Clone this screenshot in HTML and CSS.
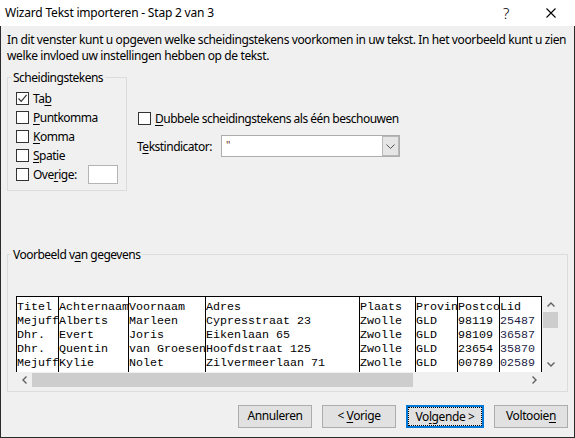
FILE: index.html
```html
<!DOCTYPE html>
<html lang="nl">

<head>
    <title>Wizard Tekst importeren</title>
    <meta charset="UTF-8">
    <link rel="stylesheet" href="styles.css">
</head>

<body>
    <div class="window">
        <div class="titlebar">
            <span class="title">Wizard Tekst importeren - Stap 2 van 3</span>
            <span class="caption-btn help">?</span>
            <span class="caption-btn close">
                <svg width="10" height="10" viewBox="0 0 10 10">
                    <path d="M0.5 0.5 L9.5 9.5 M9.5 0.5 L0.5 9.5" stroke="#000" stroke-width="1.1" fill="none" />
                </svg>
            </span>
        </div>

        <div class="content">
            <p class="intro">In dit venster kunt u opgeven welke scheidingstekens voorkomen in uw tekst. In het voorbeeld kunt u zien<br>welke invloed uw instellingen hebben op de tekst.</p>

            <div class="options">
                <fieldset class="group sep-group">
                    <legend>Scheidingstekens</legend>
                    <div class="check">
                        <span class="box">
                            <svg width="11" height="11" viewBox="0 0 11 11">
                                <path d="M1.5 5.5 L4.2 8.3 L9.6 1.8" stroke="#333" stroke-width="1.2" fill="none" />
                            </svg>
                        </span>
                        <span>Ta<u>b</u></span>
                    </div>
                    <div class="check"><span class="box"></span><span><u>P</u>untkomma</span></div>
                    <div class="check"><span class="box"></span><span><u>K</u>omma</span></div>
                    <div class="check"><span class="box"></span><span><u>S</u>patie</span></div>
                    <div class="check">
                        <span class="box"></span><span class="other-label">Ove<u>r</u>ige:</span>
                        <span class="field"></span>
                    </div>
                </fieldset>

                <div class="side">
                    <div class="check"><span class="box"></span><span><u>D</u>ubbele scheidingstekens als één beschouwen</span></div>
                    <div class="quote-row">
                        <span class="quote-label">T<u>e</u>kstindicator:</span>
                        <div class="combo">
                            <span class="combo-value">"</span>
                            <span class="drop">
                                <svg width="9" height="5" viewBox="0 0 9 5">
                                    <path d="M0.5 0.5 L4.5 4.5 L8.5 0.5" stroke="#555" stroke-width="1" fill="none" />
                                </svg>
                            </span>
                        </div>
                    </div>
                </div>
            </div>

            <fieldset class="group preview-group">
                <legend>Voorbeeld v<u>a</u>n gegevens</legend>
                <div class="preview">
                    <div class="data">
                        <div class="col w6">Titel<br>Mejuff<br>Dhr.<br>Dhr.<br>Mejuff</div>
                        <div class="col w10">Achternaam<br>Alberts<br>Evert<br>Quentin<br>Kylie</div>
                        <div class="col w11">Voornaam<br>Marleen<br>Joris<br>van Groesen<br>Nolet</div>
                        <div class="col w22">Adres<br>Cypresstraat 23<br>Eikenlaan 65<br>Hoofdstraat 125<br>Zilvermeerlaan 71</div>
                        <div class="col w8">Plaats<br>Zwolle<br>Zwolle<br>Zwolle<br>Zwolle</div>
                        <div class="col w6">Provin<br>GLD<br>GLD<br>GLD<br>GLD</div>
                        <div class="col w6">Postco<br>98119<br>98109<br>23654<br>00789</div>
                        <div class="col w6 lid">Lid<br><span>25487</span><br><span>36587</span><br><span>35870</span><br><span>02589</span></div>
                    </div>
                    <div class="vscroll">
                        <span class="arrow">
                            <svg width="8" height="5" viewBox="0 0 8 5"><path d="M0.5 4.5 L4 1 L7.5 4.5" stroke="#606060" stroke-width="1.4" fill="none" /></svg>
                        </span>
                        <span class="vthumb"></span>
                        <span class="vtrack"></span>
                        <span class="arrow">
                            <svg width="8" height="5" viewBox="0 0 8 5"><path d="M0.5 0.5 L4 4 L7.5 0.5" stroke="#606060" stroke-width="1.4" fill="none" /></svg>
                        </span>
                    </div>
                    <div class="hscroll">
                        <span class="arrow">
                            <svg width="5" height="8" viewBox="0 0 5 8"><path d="M4.5 0.5 L1 4 L4.5 7.5" stroke="#606060" stroke-width="1.4" fill="none" /></svg>
                        </span>
                        <span class="hthumb"></span>
                        <span class="htrack"></span>
                        <span class="arrow">
                            <svg width="5" height="8" viewBox="0 0 5 8"><path d="M0.5 0.5 L4 4 L0.5 7.5" stroke="#606060" stroke-width="1.4" fill="none" /></svg>
                        </span>
                    </div>
                    <div class="corner"></div>
                </div>
            </fieldset>

            <div class="buttons">
                <button class="btn"><span class="label">Annuleren</span></button>
                <button class="btn"><span class="label">&lt; <u>V</u>orige</span></button>
                <button class="btn default"><span class="label focus">Vo<u>l</u>gende &gt;</span></button>
                <button class="btn"><span class="label">Voltooie<u>n</u></span></button>
            </div>
        </div>
    </div>
</body>

</html>
```

FILE: styles.css
```css
* {
    padding: 0;
    margin: 0;
    box-sizing: border-box;
}

body {
    background-color: #f0f0f0;
    font-family: "Noto Sans", "Liberation Sans", sans-serif;
    font-size: 12px;
    letter-spacing: -0.5px;
    color: #000;
}

u {
    text-decoration-thickness: 1px;
    text-underline-offset: 2px;
}

.window {
    width: 575px;
    height: 438px;
    border: 1px solid #2b2b2b;
    border-top: none;
    background-color: #f0f0f0;
}

.titlebar {
    height: 26px;
    background-color: #fff;
    display: flex;
    align-items: center;
    margin: 0 -1px;
}

.title {
    flex: 1;
    padding-left: 5px;
    line-height: 26px;
    letter-spacing: -0.2px;
}

.caption-btn {
    width: 46px;
    height: 26px;
    display: flex;
    justify-content: center;
    align-items: center;
}

.help {
    font-size: 15px;
    font-weight: 300;
}

.close {
    padding-right: 2px;
}

.content {
    padding: 0 6px;
}

.intro {
    margin-top: 6px;
    line-height: 16px;
    letter-spacing: -0.38px;
    white-space: nowrap;
}

.options {
    display: flex;
    margin-top: 6px;
}

.group {
    border: 1px solid #dcdcdc;
    padding: 4px 8px 6px 8px;
}

.group legend {
    line-height: 15px;
    padding: 0 2px;
    margin-left: -5px;
}

.sep-group {
    width: 119px;
}

.check {
    display: flex;
    align-items: center;
    height: 19px;
}

.box {
    width: 13px;
    height: 13px;
    border: 1px solid #333;
    background-color: #fff;
    margin-right: 4px;
    display: flex;
    justify-content: center;
    align-items: center;
}

.other-label {
    width: 55px;
}

.field {
    width: 30px;
    height: 19px;
    background-color: #fff;
    border: 1px solid #b4b4b4;
}

.side {
    padding-top: 39px;
    margin-left: 11px;
}

.quote-row {
    display: flex;
    align-items: center;
    margin-top: 7px;
    margin-left: -1px;
}

.quote-label {
    width: 84px;
}

.combo {
    width: 179px;
    height: 22px;
    border: 1px solid #adadad;
    background-color: #fff;
    display: flex;
}

.combo-value {
    flex: 1;
    padding-left: 4px;
    line-height: 18px;
    color: #6b3512;
    font-size: 11px;
}

.drop {
    width: 17px;
    background-color: #e5e5e5;
    border: 1px solid #b8b8b8;
    display: flex;
    justify-content: center;
    align-items: center;
}

.preview-group {
    margin-top: 56px;
    padding: 34px 8px 3px 8px;
}

.preview {
    display: grid;
    grid-template-columns: 526px 17px;
    grid-template-rows: 76px 16px;
}

.data {
    display: flex;
    background-color: #fff;
    border-top: 1px solid #000;
    border-left: 1px solid #000;
    overflow: hidden;
    font-family: "Liberation Mono", monospace;
    font-size: 11.667px;
    letter-spacing: 0;
    line-height: 14px;
}

.col {
    border-right: 1px solid #000;
    overflow: hidden;
    white-space: pre;
    padding-top: 3px;
}

.w6 {
    width: 42px;
}

.w8 {
    width: 56px;
}

.w10 {
    width: 70px;
}

.w11 {
    width: 77px;
}

.w22 {
    width: 154px;
}

.lid span {
    color: #1c1c48;
}

.vscroll {
    display: flex;
    flex-direction: column;
    background-color: #f0f0f0;
}

.vscroll .arrow {
    height: 16px;
    display: flex;
    justify-content: center;
    align-items: center;
}

.vthumb {
    height: 16px;
    margin: 0 1px;
    background-color: #cdcdcd;
}

.vtrack {
    flex: 1;
}

.hscroll {
    display: flex;
    background-color: #f0f0f0;
}

.hscroll .arrow {
    width: 16px;
    display: flex;
    justify-content: center;
    align-items: center;
}

.hthumb {
    width: 381px;
    margin: 1px 0;
    background-color: #cdcdcd;
}

.htrack {
    flex: 1;
}

.corner {
    background-color: #f0f0f0;
}

.buttons {
    display: flex;
    justify-content: flex-end;
    gap: 10px;
    margin-top: 13px;
}

.btn {
    width: 74px;
    height: 23px;
    padding: 1px;
    background-color: #e1e1e1;
    border: 1px solid #adadad;
    font-family: "Noto Sans", "Liberation Sans", sans-serif;
    font-size: 12px;
    letter-spacing: -0.4px;
    color: #000;
}

.btn.default {
    width: 78px;
    border: 2px solid #0078d7;
    padding: 0;
}

.label {
    display: block;
    height: 100%;
    line-height: 17px;
}

.focus {
    border: 1px dotted #000;
}
```
